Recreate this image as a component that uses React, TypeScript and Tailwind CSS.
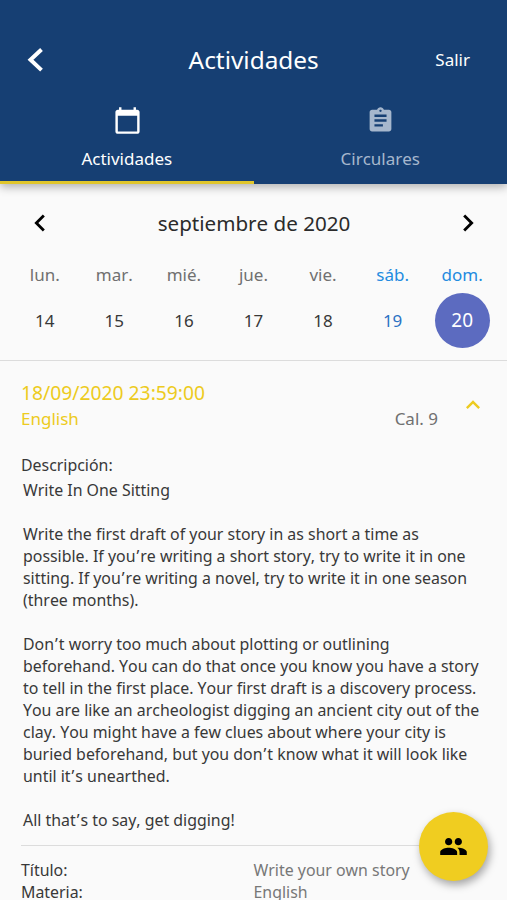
import type { ReactNode } from "react";
import {
  MdAssignment,
  MdChevronLeft,
  MdChevronRight,
  MdExpandLess,
  MdCalendarToday,
  MdGroup,
} from "react-icons/md";

const days = [
  { name: "lun.", date: 14 },
  { name: "mar.", date: 15 },
  { name: "mié.", date: 16 },
  { name: "jue.", date: 17 },
  { name: "vie.", date: 18 },
  { name: "sáb.", date: 19, weekend: true },
  { name: "dom.", date: 20, weekend: true, selected: true },
];

const story = [
  ["Write In One Sitting"],
  [],
  [
    "Write the first draft of your story in as short a time as",
    "possible. If you’re writing a short story, try to write it in one",
    "sitting. If you’re writing a novel, try to write it in one season",
    "(three months).",
  ],
  [],
  [
    "Don’t worry too much about plotting or outlining",
    "beforehand. You can do that once you know you have a story",
    "to tell in the first place. Your first draft is a discovery process.",
    "You are like an archeologist digging an ancient city out of the",
    "clay. You might have a few clues about where your city is",
    "buried beforehand, but you don’t know what it will look like",
    "until it’s unearthed.",
  ],
  [],
  ["All that’s to say, get digging!"],
];

function Tab({
  icon,
  label,
  active,
}: {
  icon: ReactNode;
  label: string;
  active?: boolean;
}) {
  return (
    <button
      className={
        active
          ? "flex h-full flex-1 flex-col items-center border-b-3 border-[#e0c62c] text-white"
          : "flex h-full flex-1 flex-col items-center text-[#a6b7cd]"
      }
    >
      <span className="mt-[14px] flex h-8 items-center">{icon}</span>
      <span className="mt-[11px] text-[17px] leading-6">{label}</span>
    </button>
  );
}

// gives the apostrophe a little room on both sides
function Line({ text }: { text: string }) {
  const [before, after] = text.split("’");
  return (
    <span className="block">
      {before}
      {after !== undefined && <span className="px-[1px]">’</span>}
      {after}
    </span>
  );
}

export default function App() {
  return (
    <div className="relative flex h-[900px] w-[507px] flex-col overflow-hidden bg-[#fafafa] font-['Noto_Sans',sans-serif] text-[#383838] [font-kerning:none]">
      <header className="z-10 flex h-[184px] shrink-0 flex-col bg-[#163f73] shadow-[0_3px_9px_rgba(0,0,0,0.3)]">
        <div className="mt-[30px] flex h-[60px] shrink-0 items-center justify-between pr-[37px] pl-[27px] text-white">
          <svg
            width="18"
            height="26"
            viewBox="0 0 18 26"
            fill="none"
            stroke="currentColor"
            strokeWidth="4"
          >
            <path d="M14.5 2.5 3.5 12.8l11 10.3" />
          </svg>
          <h1 className="pl-[27px] text-[24.4px]">Actividades</h1>
          <button className="text-[17px]">Salir</button>
        </div>
        <nav className="flex flex-1">
          <Tab
            icon={<MdCalendarToday className="ml-[1px]" size={29} />}
            label="Actividades"
            active
          />
          <Tab icon={<MdAssignment size={29} />} label="Circulares" />
        </nav>
      </header>

      <section className="flex h-[177px] shrink-0 flex-col border-b border-[#dcdcdc] px-[10px]">
        <div className="mt-[23px] flex h-8 items-center justify-between pr-[12px] pl-[13px] text-black">
          <MdChevronLeft size={34} />
          <h2 className="text-[20.6px] text-[#2b2b2b]">septiembre de 2020</h2>
          <MdChevronRight size={34} />
        </div>
        <div className="mt-[24px] grid grid-cols-7 text-center">
          {days.map((day) => (
            <div key={day.name} className="flex flex-col items-center">
              <span
                className={
                  day.weekend
                    ? "text-[17px] leading-6 text-[#238be0]"
                    : "text-[17px] leading-6 text-[#707070]"
                }
              >
                {day.name}
              </span>
              <span
                className={
                  day.selected
                    ? "mt-[6px] flex size-[55px] items-center justify-center rounded-full bg-[#5c6bc0] text-[19px] text-white"
                    : day.weekend
                      ? "mt-[6px] flex size-[55px] items-center justify-center text-[17px] text-[#2b72c4]"
                      : "mt-[6px] flex size-[55px] items-center justify-center text-[17px]"
                }
              >
                {day.date}
              </span>
            </div>
          ))}
        </div>
      </section>

      <main className="shrink-0 px-[21px] pt-[19px]">
        <div className="flex h-[52px] text-[#edcb20]">
          <div className="flex-1">
            <h3 className="text-[19.3px] leading-[26px]">
              18/09/2020 23:59:00
            </h3>
            <p className="mt-px text-[17px] leading-6">English</p>
          </div>
          <span className="mt-[27px] text-[17px] leading-6 text-[#707070]">
            Cal. 9
          </span>
          <MdExpandLess className="mt-[11px] -mr-px ml-[21px]" size={28} />
        </div>

        <p className="mt-[21px] text-[15.9px] leading-6">Descripción:</p>
        <div className="mt-[2px] pl-[2px] text-[15.9px] leading-[22px] whitespace-nowrap">
          {story.map((lines, i) =>
            lines.length === 0 ? (
              <br key={i} />
            ) : (
              <p key={i}>
                {lines.map((line) => (
                  <Line key={line} text={line} />
                ))}
              </p>
            )
          )}
        </div>

        <dl className="mt-[14px] grid grid-cols-2 border-t border-[#dcdcdc] pt-[13px] text-[15.9px] leading-[22px]">
          <dt>Título:</dt>
          <dd className="text-[#777]">Write your own story</dd>
          <dt>Materia:</dt>
          <dd className="text-[#777]">English</dd>
        </dl>
      </main>

      <button className="absolute right-[19px] bottom-[19px] flex size-[69px] items-center justify-center rounded-full bg-[#f0cd20] text-black shadow-[2px_4px_9px_rgba(0,0,0,0.35)]">
        <MdGroup size={29} />
      </button>
    </div>
  );
}
